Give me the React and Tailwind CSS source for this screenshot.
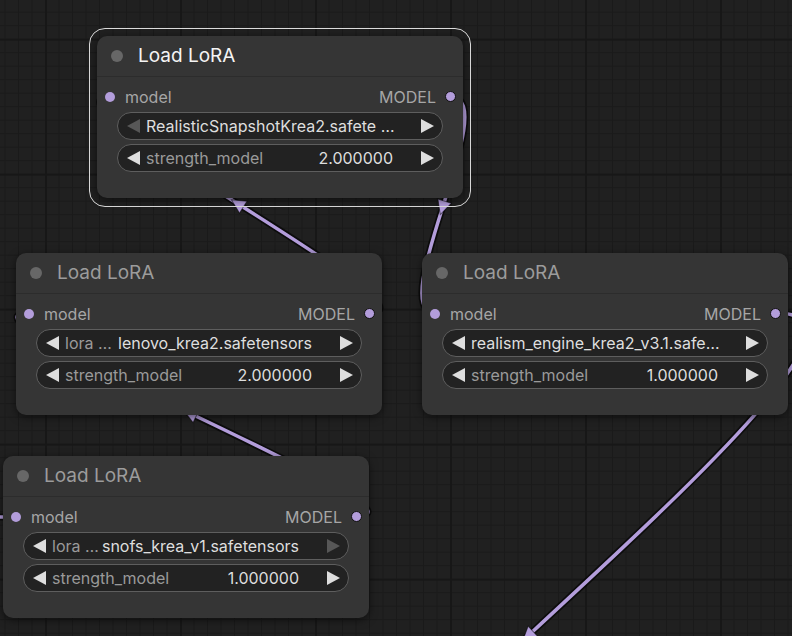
import React from "react";

const LINK = "#b39ddb";

function bez(a, b) {
  const d = Math.hypot(b[0] - a[0], b[1] - a[1]) * 0.25;
  return [a, [a[0] + d, a[1]], [b[0] - d, b[1]], b];
}

function midAndAngle(p) {
  const [p0, p1, p2, p3] = p;
  const x = 0.125 * p0[0] + 0.375 * p1[0] + 0.375 * p2[0] + 0.125 * p3[0];
  const y = 0.125 * p0[1] + 0.375 * p1[1] + 0.375 * p2[1] + 0.125 * p3[1];
  const dx = p3[0] + p2[0] - p1[0] - p0[0];
  const dy = p3[1] + p2[1] - p1[1] - p0[1];
  return { x, y, a: (Math.atan2(dy, dx) * 180) / Math.PI };
}

const links = [
  bez([369, 313], [110.7, 97]),
  bez([450.7, 97], [436, 313]),
  bez([356, 516], [29, 313]),
  bez([776, 313], [284, 955]),
];

function Canvas() {
  return (
    <svg className="absolute inset-0" width="792" height="636">
      <defs>
        <pattern id="minor" width="13.5" height="13.5" patternUnits="userSpaceOnUse" x="45" y="11.7">
          <path d="M 0.5 0 L 0.5 13.5 M 0 0.5 L 13.5 0.5" fill="none" stroke="#1a1a1a" strokeWidth="1" />
        </pattern>
        <pattern id="major" width="135" height="135" patternUnits="userSpaceOnUse" x="45" y="38.7">
          <path d="M 1 0 L 1 135 M 0 1 L 135 1" fill="none" stroke="#171717" strokeWidth="2" />
        </pattern>
      </defs>
      <rect width="792" height="636" fill="#202020" />
      <rect width="792" height="636" fill="url(#minor)" />
      <rect width="792" height="636" fill="url(#major)" />
      {links.map((p, i) => {
        const d = `M ${p[0][0]} ${p[0][1]} C ${p[1][0]} ${p[1][1]} ${p[2][0]} ${p[2][1]} ${p[3][0]} ${p[3][1]}`;
        return (
          <g key={i}>
            <path d={d} fill="none" stroke="rgba(0,0,0,0.6)" strokeWidth="7" />
            <path d={d} fill="none" stroke={LINK} strokeWidth="3.5" />
          </g>
        );
      })}
      <path d="M -40 517 L 15 517" fill="none" stroke="rgba(0,0,0,0.6)" strokeWidth="7" />
      <path d="M -40 517 L 15 517" fill="none" stroke={LINK} strokeWidth="3.5" />
      {links.map((p, i) => {
        const m = midAndAngle(p);
        return (
          <polygon
            key={"a" + i}
            points="10,0 -4,-7 -4,7"
            fill={LINK}
            stroke="rgba(0,0,0,0.5)"
            strokeWidth="1"
            transform={`translate(${m.x} ${m.y}) rotate(${m.a})`}
          />
        );
      })}
    </svg>
  );
}

function Tri({ dir, dim }) {
  return (
    <svg width="13" height="14" viewBox="0 0 13 14" className="block">
      <polygon points={dir === "l" ? "0,7 13,0 13,14" : "0,0 13,7 0,14"} fill={dim ? "#575757" : "#dedede"} />
    </svg>
  );
}

function Widget({ label, value, leftDim, rightDim, valueLeft }) {
  return (
    <div className="flex items-center h-[28px] rounded-full border border-[#5e5e5e] bg-[#222222] text-[16px] whitespace-nowrap">
      <div className="w-[28px] pl-[9px] flex shrink-0">
        <Tri dir="l" dim={leftDim} />
      </div>
      <div className="flex-1 flex items-center min-w-0">
        {label && <span className="text-[#9a9a9a] shrink-0">{label}</span>}
        <span className={(valueLeft ? "" : "ml-auto mr-[3px] ") + "text-[#dedede]"}>{value}</span>
      </div>
      <div className="w-[46px] flex justify-end pr-[8px] shrink-0">
        <Tri dir="r" dim={rightDim} />
      </div>
    </div>
  );
}

function Node({ x, y, selected, w1, w2 }) {
  return (
    <div
      className="absolute w-[366px] h-[162px] rounded-[10px] bg-[#353535] shadow-[0_2px_8px_rgba(0,0,0,0.55)]"
      style={{ left: x, top: y }}
    >
      <div className="h-[41px] flex items-center border-b border-[#2c2c2c]">
        <span className="ml-[14px] w-[12px] h-[12px] rounded-full bg-[#676767]" />
        <span className={"ml-[15px] text-[19px] " + (selected ? "text-[#f4f4f4]" : "text-[#9c9c9c]")}>Load LoRA</span>
      </div>
      <div className="pt-[8px]">
        <div className="flex items-center h-[23px] pl-[8px] pr-[7px] text-[16px]">
          <span className="w-[10px] h-[10px] rounded-full bg-[#b39ddb]" />
          <span className="ml-[10px] text-[#a6a6a6]">model</span>
          <span className="ml-auto mr-[9px] text-[#a6a6a6]">MODEL</span>
          <span className="w-[11px] h-[11px] rounded-full bg-[#b39ddb] border-[1.5px] border-[#111111]" />
        </div>
        <div className="mt-[4px] px-[20px] flex flex-col gap-[4px]">
          <Widget {...w1} />
          <Widget {...w2} />
        </div>
      </div>
    </div>
  );
}

export default function App() {
  return (
    <div className="relative w-[792px] h-[636px] overflow-hidden bg-[#202020] font-[Inter,sans-serif]">
      <Canvas />
      <div className="absolute left-[89px] top-[28px] w-[382px] h-[179px] rounded-[16px] border-[1.5px] border-[#dcdcdc]" />
      <Node
        x={97}
        y={36}
        selected
        w1={{ value: "RealisticSnapshotKrea2.safete …", leftDim: true, valueLeft: true }}
        w2={{ label: "strength_model", value: "2.000000" }}
      />
      <Node
        x={16}
        y={253}
        w1={{ label: "lora  …", value: "lenovo_krea2.safetensors" }}
        w2={{ label: "strength_model", value: "2.000000" }}
      />
      <Node
        x={422}
        y={253}
        w1={{ value: "realism_engine_krea2_v3.1.safe…", valueLeft: true }}
        w2={{ label: "strength_model", value: "1.000000" }}
      />
      <Node
        x={3}
        y={456}
        w1={{ label: "lora …", value: "snofs_krea_v1.safetensors", rightDim: true }}
        w2={{ label: "strength_model", value: "1.000000" }}
      />
    </div>
  );
}
